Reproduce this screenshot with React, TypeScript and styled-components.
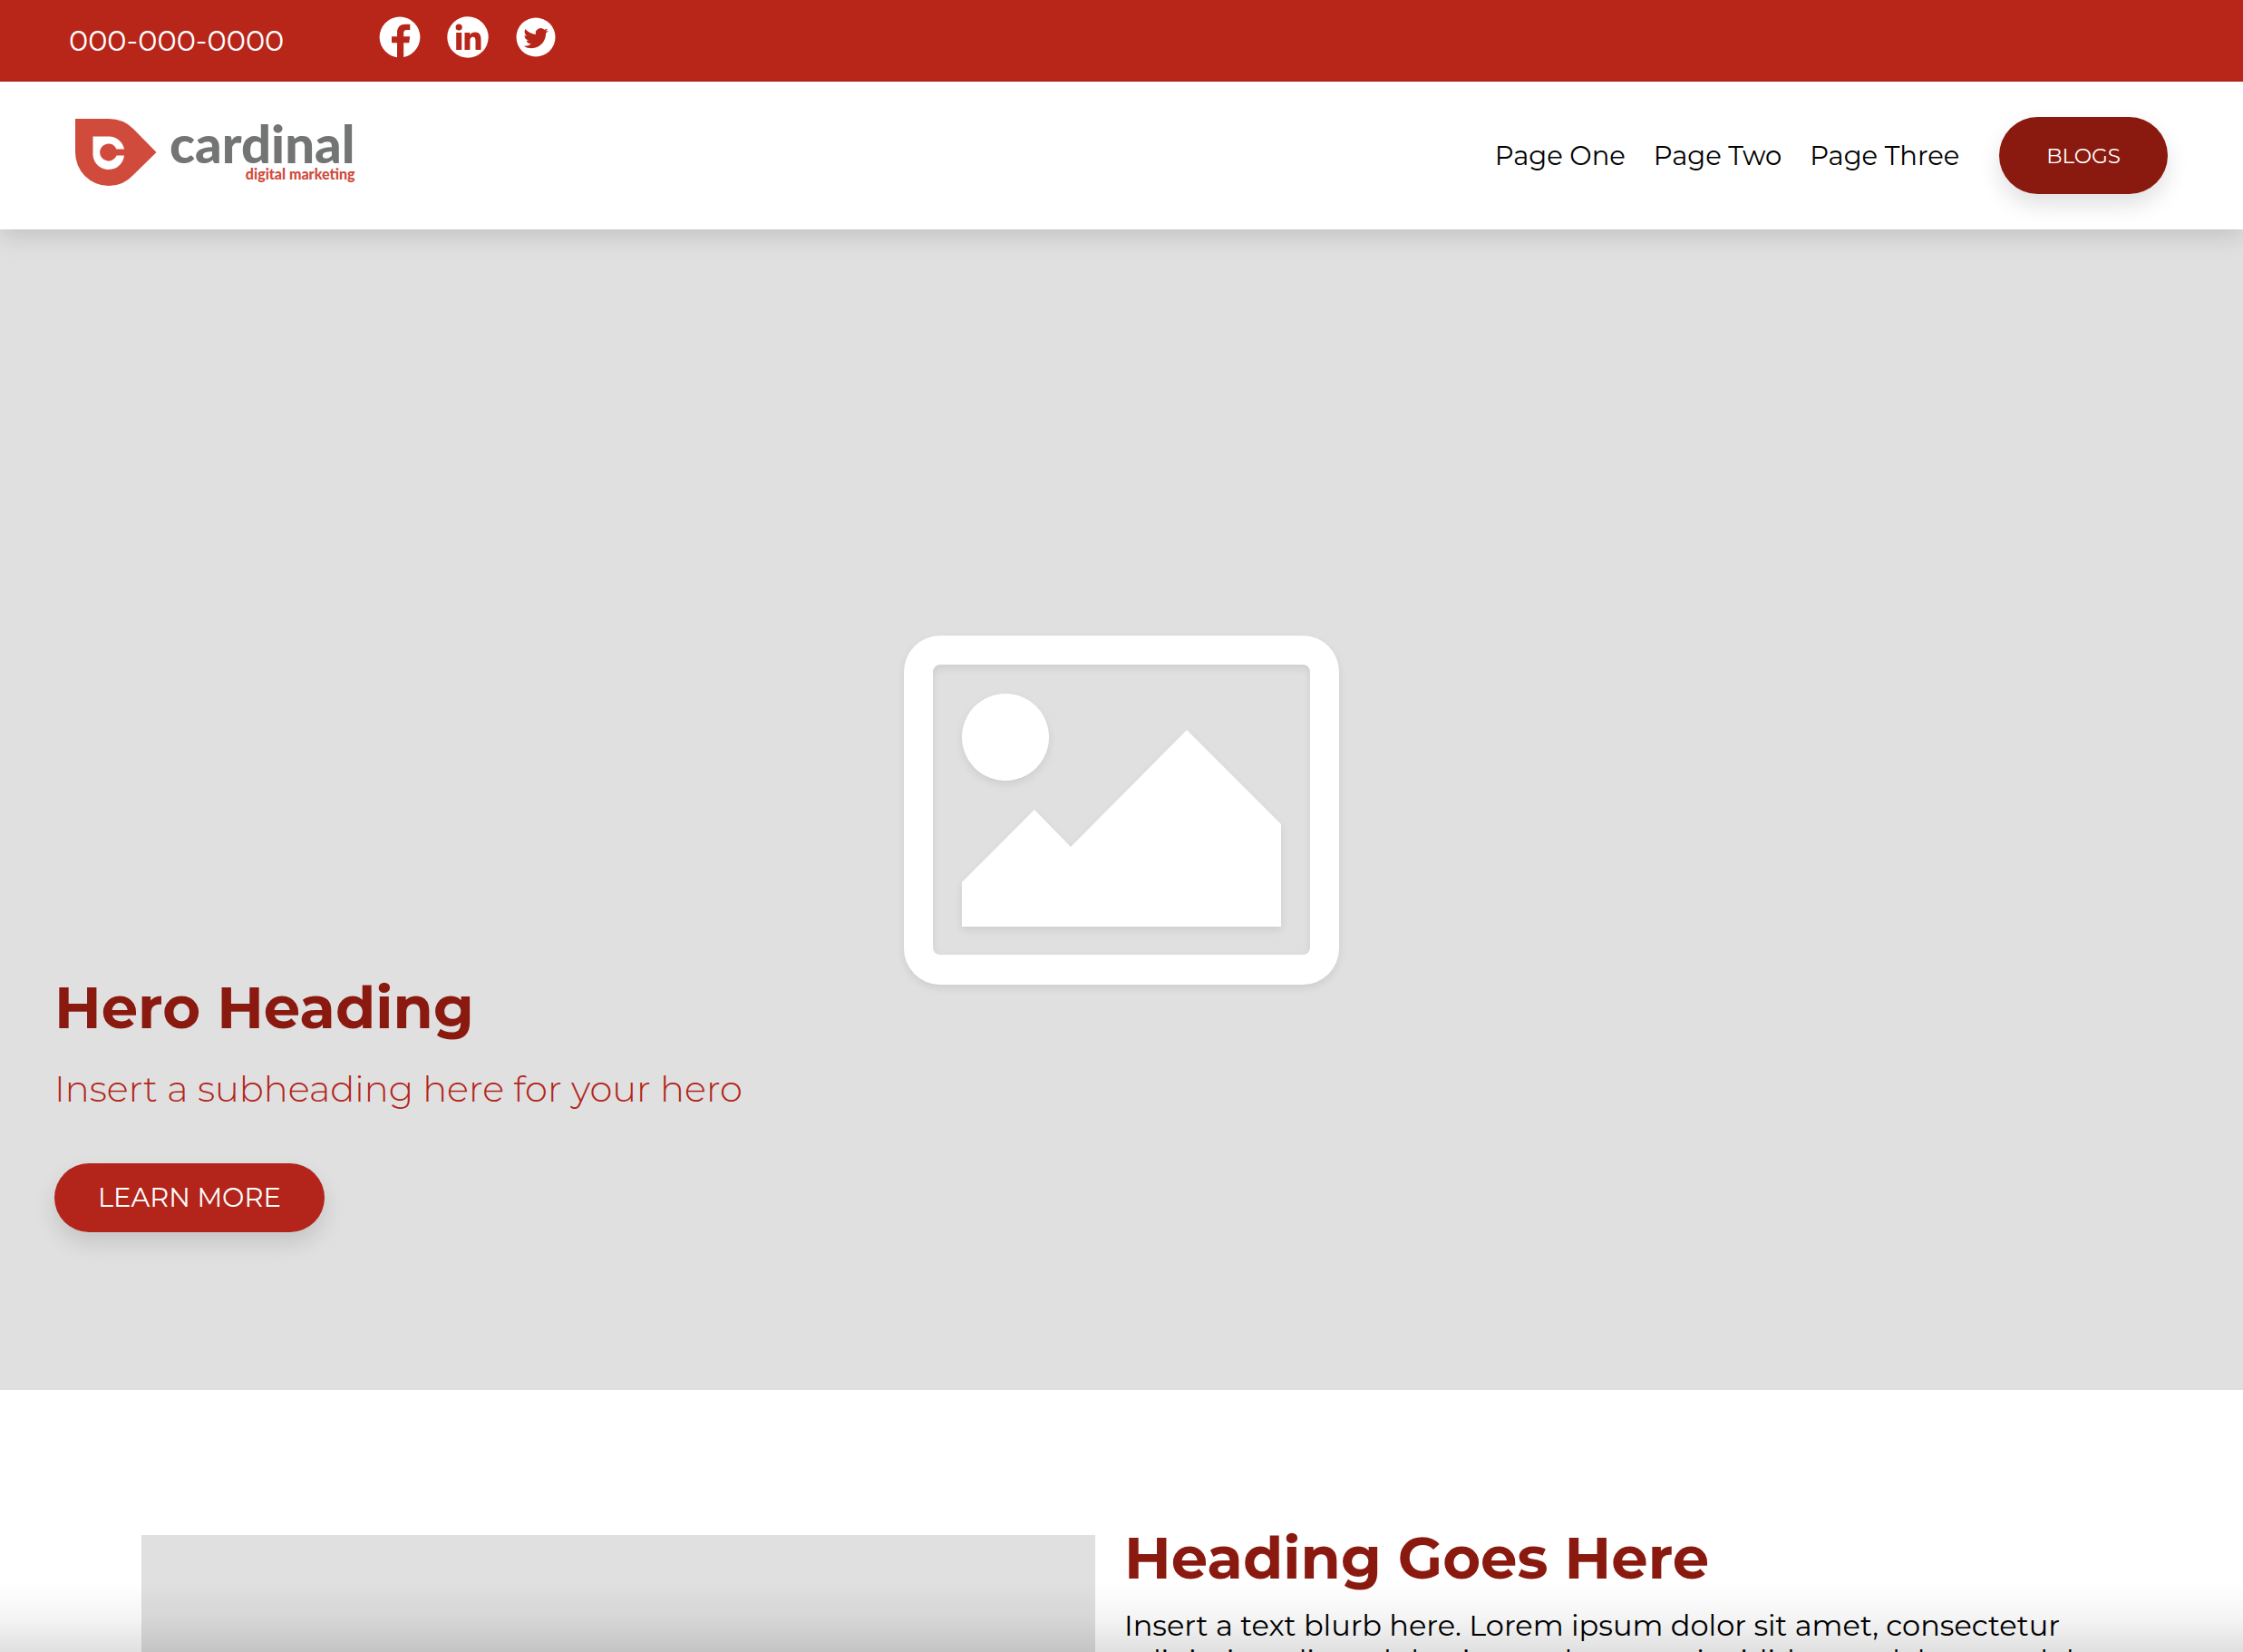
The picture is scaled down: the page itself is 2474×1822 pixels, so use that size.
import React from "react";
import styled, { createGlobalStyle } from "styled-components";

const GlobalStyle = createGlobalStyle`
  body { margin: 0; background: #fff; }
  *, *::before, *::after { box-sizing: border-box; }
`;

const fonts = `Montserrat, Inter, "Noto Sans", sans-serif`;

const Page = styled.div`
  height: 100vh;
  overflow: hidden;
  font-family: ${fonts};
  color: #000;
`;

const TopBar = styled.div`
  position: relative;
  z-index: 2;
  display: flex;
  align-items: center;
  gap: 105px;
  height: 90px;
  padding: 0 76px;
  background: #b8261a;
  border-bottom: 1px solid #a81d14;
`;

const Phone = styled.a`
  font-size: 32px;
  line-height: 40px;
  color: #fff;
  text-decoration: none;
`;

const Socials = styled.div`
  display: flex;
  align-items: center;
  gap: 29px;
  padding-bottom: 8px;
`;

const SocialLink = styled.a`
  display: flex;
  svg { display: block; width: 46px; height: 46px; }
`;

const Header = styled.header`
  position: relative;
  z-index: 1;
  display: flex;
  align-items: center;
  justify-content: space-between;
  height: 163px;
  padding: 0 83px;
  background: #fff;
  box-shadow: 0 8px 24px rgba(0, 0, 0, 0.13);
`;

const Logo = styled.a`
  display: flex;
  gap: 14px;
  padding-bottom: 8px;
  text-decoration: none;
  svg { display: block; width: 90px; height: 74px; }
`;

const Wordmark = styled.span`
  display: flex;
  flex-direction: column;
  align-items: flex-end;
  font-family: Lato, sans-serif;
  font-weight: 900;
`;

const BrandName = styled.span`
  font-size: 58px;
  line-height: 54px;
  color: #727573;
`;

const BrandTag = styled.span`
  font-size: 16px;
  line-height: 14px;
  color: #d04b3c;
`;

const Nav = styled.nav`
  display: flex;
  align-items: center;
  gap: 31px;
`;

const NavLink = styled.a`
  font-size: 29px;
  line-height: 36px;
  color: #000;
  text-decoration: none;
`;

const PillButton = styled.button<{ $dark?: boolean }>`
  height: ${(p) => (p.$dark ? 85 : 76)}px;
  padding: 0 ${(p) => (p.$dark ? 52 : 48)}px;
  margin-left: ${(p) => (p.$dark ? 13 : 0)}px;
  border: 0;
  border-radius: 44px;
  background: ${(p) => (p.$dark ? "#8a1a10" : "#b3251a")};
  box-shadow: 0 12px 24px rgba(0, 0, 0, 0.12);
  color: #fff;
  font-family: inherit;
  font-size: ${(p) => (p.$dark ? 23 : 29)}px;
  line-height: 36px;
  white-space: nowrap;
`;

const Hero = styled.section`
  display: grid;
  height: 1280px;
  background: #e0e0e0;
  > * { grid-area: 1 / 1; }
`;

const HeroArt = styled.div`
  place-self: center;
  svg { display: block; width: 480px; height: 385px; overflow: visible; filter: drop-shadow(0 4px 4px rgba(0, 0, 0, 0.08)); }
`;

const HeroCopy = styled.div`
  display: flex;
  flex-direction: column;
  align-items: flex-start;
  align-self: end;
  padding: 0 60px 174px;
`;

const Title = styled.h2`
  margin: 0;
  font-size: 64px;
  line-height: 50px;
  font-weight: 700;
  color: #8a1a10;
`;

const Subtitle = styled.p`
  margin: 39px 0 56px;
  font-size: 40px;
  line-height: 52px;
  font-weight: 300;
  color: #b3251a;
`;

const Feature = styled.section`
  display: flex;
  gap: 32px;
  padding: 160px 128px 160px 156px;
`;

const FeatureImage = styled.div`
  flex: 1052;
  height: 840px;
  background: #e0e0e0;
`;

const FeatureCopy = styled.div`
  flex: 1106;
  min-width: 0;
`;

const Blurb = styled.p`
  margin: 30px 0 0;
  font-size: 32px;
  line-height: 39px;
`;

const BottomFade = styled.div`
  position: fixed;
  inset: auto 0 0;
  height: 78px;
  background: linear-gradient(rgba(0, 0, 0, 0), rgba(0, 0, 0, 0.04) 50%, rgba(0, 0, 0, 0.12));
  pointer-events: none;
`;

const FacebookIcon = () => (
  <svg viewBox="0 0 46 46" aria-hidden="true">
    <circle cx="23" cy="23" r="22.400" fill="#fff" />
    <path fill="#b8261a" d="M20 46V29.300H14V22.300H20V18C20 12 23.500 8.800 29 8.800H34.300V15H31C28 15 27.200 16.300 27.200 18.800V22.300H34.200L33.200 29.300H27.200V46z" />
  </svg>
);

const LinkedinIcon = () => (
  <svg viewBox="0 0 46 46" aria-hidden="true">
    <circle cx="23" cy="23" r="22.700" fill="#fff" />
    <g fill="#b8261a">
      <circle cx="13.200" cy="12" r="3.600" />
      <path d="M10.200 18h6v19h-6zM19.500 18h5.800v2.600c1-1.900 3.200-3 5.700-3 4.800 0 6.500 3 6.500 8V37h-6V27c0-2.700-.6-4.300-2.800-4.300-2.400 0-3.300 1.800-3.300 4.400V37h-5.900z" />
    </g>
  </svg>
);

const TwitterIcon = () => (
  <svg viewBox="0 0 46 46" aria-hidden="true">
    <circle cx="23" cy="23" r="21.500" fill="#fff" />
    <path transform="translate(9.500 10.500) scale(1.140)" fill="#b8261a" d="M23.950 4.570a10 10 0 0 1-2.820.77 4.960 4.960 0 0 0 2.160-2.720c-.95.550-2 .950-3.130 1.180a4.920 4.920 0 0 0-8.380 4.480C7.690 8.100 4.070 6.130 1.640 3.160a4.920 4.920 0 0 0 1.520 6.570 4.900 4.900 0 0 1-2.230-.61v.06a4.920 4.920 0 0 0 3.950 4.830 5 5 0 0 1-2.210.08 4.940 4.940 0 0 0 4.600 3.420A9.870 9.870 0 0 1 0 19.540a14 14 0 0 0 7.550 2.210c9.050 0 14-7.500 14-13.980 0-.21 0-.42-.02-.63a9.940 9.940 0 0 0 2.460-2.550z" />
  </svg>
);

const LogoMark = () => (
  <svg viewBox="0 0 90 74" aria-hidden="true">
    <path fill="#d04b3c" d="M0 0H37Q53 0 64 11L89.500 37L64 62Q53 74 37 74A37 37 0 0 1 0 37z" />
    <path fill="#fff" d="M19.500 19.500H37A17 17 0 0 1 54 33.500H45.500A9.500 9.500 0 1 0 45.500 40.500H54A17.300 17.300 0 0 1 19.500 37z" />
  </svg>
);

const PictureIcon = () => (
  <svg viewBox="0 0 480 385" aria-hidden="true">
    <g fill="#fff">
      <path fillRule="evenodd" d="M40 0H440A40 40 0 0 1 480 40V345A40 40 0 0 1 440 385H40A40 40 0 0 1 0 345V40A40 40 0 0 1 40 0zM40 32A8 8 0 0 0 32 40V344A8 8 0 0 0 40 352H440A8 8 0 0 0 448 344V40A8 8 0 0 0 440 32z" />
      <circle cx="112" cy="112" r="48" />
      <path d="M64 272L144 192L184 233L312 104L416 208V321H64z" />
    </g>
  </svg>
);

export default function App() {
  return (
    <Page>
      <GlobalStyle />
      <TopBar>
        <Phone href="tel:000-000-0000">000-000-0000</Phone>
        <Socials>
          <SocialLink href="#" aria-label="Facebook"><FacebookIcon /></SocialLink>
          <SocialLink href="#" aria-label="LinkedIn"><LinkedinIcon /></SocialLink>
          <SocialLink href="#" aria-label="Twitter"><TwitterIcon /></SocialLink>
        </Socials>
      </TopBar>
      <Header>
        <Logo href="#">
          <LogoMark />
          <Wordmark>
            <BrandName>cardinal</BrandName>
            <BrandTag>digital marketing</BrandTag>
          </Wordmark>
        </Logo>
        <Nav>
          <NavLink href="#">Page One</NavLink>
          <NavLink href="#">Page Two</NavLink>
          <NavLink href="#">Page Three</NavLink>
          <PillButton $dark>BLOGS</PillButton>
        </Nav>
      </Header>
      <main>
        <Hero>
          <HeroArt><PictureIcon /></HeroArt>
          <HeroCopy>
            <Title as="h1">Hero Heading</Title>
            <Subtitle>Insert a subheading here for your hero</Subtitle>
            <PillButton>LEARN MORE</PillButton>
          </HeroCopy>
        </Hero>
        <Feature>
          <FeatureImage />
          <FeatureCopy>
            <Title>Heading Goes Here</Title>
            <Blurb>
              Insert a text blurb here. Lorem ipsum dolor sit amet, consectetur
              adipiscing elit, sed do eiusmod tempor incididunt ut labore et dolore
            </Blurb>
          </FeatureCopy>
        </Feature>
      </main>
      <BottomFade />
    </Page>
  );
}
